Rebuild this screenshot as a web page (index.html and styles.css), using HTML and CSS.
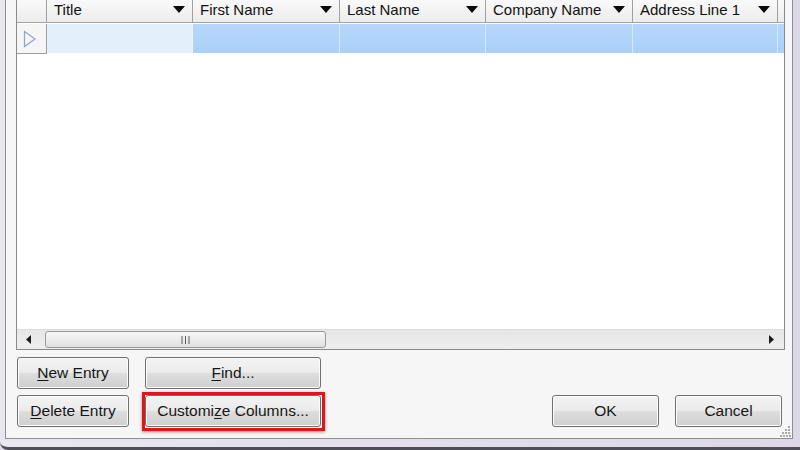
FILE: index.html
```html
<!DOCTYPE html>
<html>
<head>
<meta charset="utf-8">
<link rel="stylesheet" href="styles.css">
</head>
<body>
<div class="frame">
  <div class="client">
    <div class="grid">
      <div class="hdr">
        <div class="rh"></div>
        <div class="hc w1"><span>Title</span><i class="dd"></i></div>
        <div class="hc w2"><span>First Name</span><i class="dd"></i></div>
        <div class="hc w1"><span>Last Name</span><i class="dd"></i></div>
        <div class="hc w2"><span>Company Name</span><i class="dd"></i></div>
        <div class="hc w3"><span>Address Line 1</span><i class="dd"></i></div>
        <div class="hfill"></div>
      </div>
      <div class="row">
        <div class="rh cur">
          <svg width="14" height="18" viewBox="0 0 14 18"><path d="M1.5 1.5 L12 9 L1.5 16.5 Z" fill="none" stroke="#8ea6c6" stroke-width="1.2"/></svg>
        </div>
        <div class="dc first w1"></div>
        <div class="dc w2"></div>
        <div class="dc w1"></div>
        <div class="dc w2"></div>
        <div class="dc w3"></div>
        <div class="dc fill"></div>
      </div>
      <div class="body"></div>
      <div class="hscroll">
        <div class="arrow">
          <svg width="6" height="9" viewBox="0 0 6 9"><path d="M5 0 L0 4.5 L5 9 Z" fill="#1a1a1a"/></svg>
        </div>
        <div class="track">
          <div class="thumb">
            <svg width="9" height="8" viewBox="0 0 9 8"><path d="M1 0 V8 M4.5 0 V8 M8 0 V8" stroke="#5a5a5a" stroke-width="1"/></svg>
          </div>
        </div>
        <div class="arrow right">
          <svg width="6" height="9" viewBox="0 0 6 9"><path d="M1 0 L6 4.5 L1 9 Z" fill="#1a1a1a"/></svg>
        </div>
      </div>
    </div>
    <div class="buttons">
      <div class="brow">
        <button class="btn b-small"><u>N</u>ew Entry</button>
        <button class="btn b-wide"><u>F</u>ind...</button>
      </div>
      <div class="brow">
        <button class="btn b-small"><u>D</u>elete Entry</button>
        <button class="btn b-wide hl">Customi<u>z</u>e Columns...</button>
        <div class="spacer"></div>
        <button class="btn b-dlg">OK</button>
        <button class="btn b-dlg">Cancel</button>
      </div>
    </div>
    <svg class="grip" width="11" height="11" viewBox="0 0 11 11">
      <g fill="#a8a8a8">
        <rect x="8" y="0" width="2" height="2"/>
        <rect x="5" y="3" width="2" height="2"/><rect x="8" y="3" width="2" height="2"/>
        <rect x="2" y="6" width="2" height="2"/><rect x="5" y="6" width="2" height="2"/><rect x="8" y="6" width="2" height="2"/>
        <rect x="0" y="9" width="2" height="2"/><rect x="3" y="9" width="2" height="2"/><rect x="6" y="9" width="2" height="2"/><rect x="9" y="9" width="2" height="2"/>
      </g>
    </svg>
  </div>
</div>
</body>
</html>
```

FILE: styles.css
```css
* { box-sizing: border-box; }

html, body {
  margin: 0;
  padding: 0;
  width: 800px;
  height: 450px;
  overflow: hidden;
  background: #dcd8e8;
  font-family: "Liberation Sans", Arial, sans-serif;
  font-size: 15.5px;
  color: #161616;
}

.frame {
  display: flex;
  height: 450px;
  padding: 0 7px 8px 5px;
  background: linear-gradient(90deg, #e8e6ee 0%, #dcd8e8 100%);
  border-bottom: 3px solid #4e4e58;
  border-bottom-left-radius: 8px;
}

.client {
  position: relative;
  flex: 1;
  display: flex;
  flex-direction: column;
  background: #f6f6f6;
  border: 1px solid #8e8e8e;
  border-top: none;
  padding: 0 7px 0 10px;
}

.grid {
  margin-top: -4px;
  height: 354px;
  border: 1px solid #8a8a8a;
  background: #ffffff;
  display: flex;
  flex-direction: column;
  overflow: hidden;
}

.hdr {
  display: flex;
  height: 26px;
  flex: none;
  border-bottom: 1px solid #a3a3a3;
  background: linear-gradient(#fbfbfb, #ececec);
}

.rh {
  width: 30px;
  flex: none;
  border-right: 1px solid #a0a0a0;
}

.hc {
  display: flex;
  align-items: center;
  flex: none;
  padding-left: 7px;
  border-right: 1px solid #a0a0a0;
  color: #111;
  white-space: nowrap;
  font-size: 15px;
}
.hc span { line-height: normal; }
.w1 { width: 146px; }
.w2 { width: 147px; }
.w3 { width: 145px; }
.hfill { flex: 1; }

.dd {
  margin-left: auto;
  margin-right: 7px;
  width: 0;
  height: 0;
  border-left: 6px solid transparent;
  border-right: 6px solid transparent;
  border-top: 7px solid #0a0a0a;
}

.row {
  display: flex;
  height: 30px;
  flex: none;
  margin-top: 1px;
}

.rh.cur {
  background: #f5f5f5;
  border-bottom: 1px solid #9f9f9f;
  display: flex;
  align-items: center;
  padding-left: 6px;
}

.dc {
  flex: none;
  height: 29px;
  border-right: 1px solid #d6e8fb;
  background: linear-gradient(#b6d7fa, #aad0f8);
}
.dc.first { background: #e4effc; border-right-color: #eef5fd; }
.dc.fill { flex: 1; border-right: none; }

.body { flex: 1; }

.hscroll {
  display: flex;
  height: 20px;
  flex: none;
  border-top: 1px solid #dcdcdc;
  background: linear-gradient(#e6e6e6, #eeeeee);
}

.arrow {
  width: 27px;
  flex: none;
  display: flex;
  align-items: center;
  justify-content: center;
  padding-right: 4px;
}
.arrow.right { width: 24px; padding-right: 3px; padding-left: 0; }

.track {
  flex: 1;
  display: flex;
  padding: 1px 0 1px 1px;
}

.thumb {
  width: 281px;
  border: 1px solid #9a9a9a;
  border-radius: 3px;
  background: linear-gradient(#f7f7f7, #e0e0e0);
  display: flex;
  align-items: center;
  justify-content: center;
}

.buttons {
  display: flex;
  flex-direction: column;
  gap: 6px;
  padding: 7px 3px 0 1px;
}

.brow {
  display: flex;
  gap: 16px;
}

.btn {
  height: 32px;
  border: 1px solid #707070;
  border-radius: 3px;
  background: linear-gradient(#f3f3f3 0%, #ebebeb 48%, #dddddd 52%, #cfcfcf 100%);
  box-shadow: inset 0 0 0 1px #fbfbfb;
  font-family: "Liberation Sans", Arial, sans-serif;
  font-size: 15.5px;
  color: #161616;
  padding: 0;
  text-align: center;
}
.btn u { text-decoration-thickness: 1px; text-underline-offset: 2px; }

.b-small { width: 112px; }
.b-wide { width: 176px; }
.b-dlg { width: 107px; }

.hl { position: relative; }
.hl::after {
  content: "";
  position: absolute;
  top: -4px;
  left: -4px;
  right: -5px;
  bottom: -5px;
  border: 3px solid #e0141c;
  box-shadow: 0 1px 3px rgba(80, 0, 0, 0.45);
}

.spacer { flex: 1; }

.grip {
  position: absolute;
  right: 1px;
  bottom: 1px;
}
```
